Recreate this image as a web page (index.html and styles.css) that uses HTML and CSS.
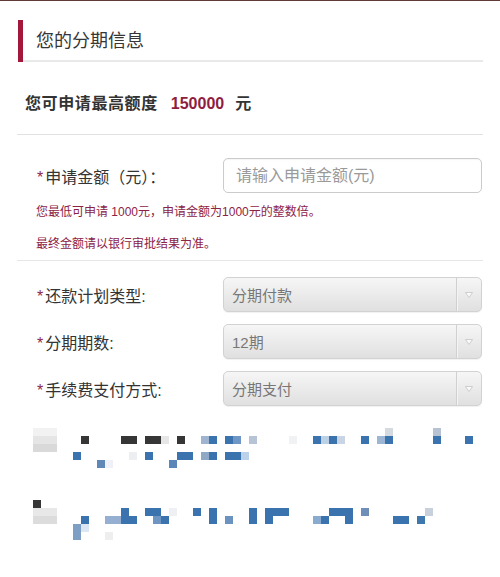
FILE: index.html
```html
<!DOCTYPE html>
<html lang="zh-CN">
<head>
  <meta charset="UTF-8" />
  <title>分期信息</title>
  <link rel="stylesheet" href="styles.css">
</head>
<body>

<div class="topline"></div>

<div class="page">
  <div class="sec-head">
    <span class="sec-bar"></span>
    <h2 class="sec-title">您的分期信息</h2>
  </div>

  <div class="quota">您可申请最高额度<span class="quota-num">150000</span>元</div>

  <div class="form-block amount">
    <div class="field">
      <label class="field-label"><i class="req">*</i>申请金额（元）：</label>
      <input class="text-input" type="text" placeholder="请输入申请金额(元)">
    </div>
    <p class="hint first">您最低可申请 1000元，申请金额为1000元的整数倍。</p>
    <p class="hint">最终金额请以银行审批结果为准。</p>
  </div>

  <div class="form-block selects">
    <div class="field">
      <label class="field-label"><i class="req">*</i>还款计划类型:</label>
      <div class="select"><span class="select-val">分期付款</span><span class="select-btn"><svg width="8" height="6" viewBox="0 0 8 6"><path d="M0.5 0.5h7L4 5.5z" fill="#fbfbfb" stroke="#c4c4c4" stroke-width="0.8"/></svg></span></div>
    </div>
    <div class="field">
      <label class="field-label"><i class="req">*</i>分期期数:</label>
      <div class="select"><span class="select-val">12期</span><span class="select-btn"><svg width="8" height="6" viewBox="0 0 8 6"><path d="M0.5 0.5h7L4 5.5z" fill="#fbfbfb" stroke="#c4c4c4" stroke-width="0.8"/></svg></span></div>
    </div>
    <div class="field">
      <label class="field-label"><i class="req">*</i>手续费支付方式:</label>
      <div class="select"><span class="select-val">分期支付</span><span class="select-btn"><svg width="8" height="6" viewBox="0 0 8 6"><path d="M0.5 0.5h7L4 5.5z" fill="#fbfbfb" stroke="#c4c4c4" stroke-width="0.8"/></svg></span></div>
    </div>
  </div>
</div>

<div class="mosaic" id="mosaic"></div>

<script>
  // 打码区域：[列, 行, 宽, 高, 颜色]
  const B = '#3a73ad';
  const D = '#363636';
  const cells = [
    [4, 53, 3, 1, '#f2f2f2'], [4, 54, 3, 1, '#e5e5e5'], [4, 55, 3, 1, '#d9d9d9'],
    [10, 54, 1, 1, D], [15, 54, 2, 1, D], [18, 54, 2, 1, D], [20, 54, 1, 1, '#e6e6e6'],
    [22, 54, 1, 1, D], [25, 54, 1, 1, '#9fb4cf'], [26, 54, 1, 1, B],
    [28, 54, 1, 1, B], [29, 54, 1, 1, '#6e97c6'], [31, 54, 1, 1, '#b6c4d6'],
    [36, 54, 1, 1, '#f0f2f4'], [39, 54, 1, 1, B], [40, 54, 1, 1, '#bcd0e6'],
    [41, 54, 1, 1, B], [42, 54, 1, 1, '#c9d5e4'], [45, 54, 1, 1, B],
    [47, 54, 1, 1, '#9db6d4'], [48, 54, 1, 1, B], [48, 53, 1, 1, '#d5dae0'],
    [54, 54, 1, 1, B], [54, 53, 1, 1, '#b7c3d2'], [58, 54, 1, 1, B],
    [9, 56, 1, 1, B], [16, 56, 1, 1, '#eceef2'], [18, 56, 1, 1, B], [22, 56, 2, 1, B],
    [25, 56, 1, 1, '#8ea8c6'], [26, 56, 1, 1, B], [28, 56, 2, 1, B], [30, 56, 1, 1, '#bcd2ea'],
    [12, 57, 1, 1, '#5f88b6'], [13, 57, 1, 1, '#eef2f6'], [21, 57, 1, 1, '#5a86b8'],

    [4, 62, 1, 1, D], [4, 63, 3, 1, '#e8e8e8'], [4, 64, 3, 1, '#dcdcdc'],
    [10, 64, 1, 1, B], [9, 65, 1, 2, '#7e9fc4'], [10, 65, 1, 1, '#dbe7f3'],
    [13, 64, 2, 1, '#94afd0'], [15, 63, 1, 1, B], [15, 64, 2, 1, B], [13, 66, 1, 1, '#eeeeee'],
    [18, 63, 2, 1, B], [19, 64, 1, 1, '#6f96c3'], [20, 64, 1, 1, B], [21, 63, 1, 1, '#eef0f4'],
    [24, 63, 1, 1, B], [26, 63, 1, 2, B], [28, 64, 1, 1, '#6c92bf'], [31, 63, 1, 2, B],
    [33, 63, 3, 1, B], [33, 64, 1, 1, B],
    [39, 64, 1, 1, '#8aaad0'], [40, 64, 1, 1, B], [41, 63, 3, 1, B], [43, 64, 1, 1, B],
    [45, 63, 1, 1, '#6f8fb8'], [49, 64, 2, 1, B], [52, 64, 1, 1, '#3f78ad'], [53, 63, 1, 1, '#c8d0dc']
  ];

  const mosaic = document.getElementById('mosaic');
  cells.forEach(([c, r, w, h, color]) => {
    const cell = document.createElement('div');
    cell.className = 'cell';
    cell.style.gridColumn = `${c + 1} / span ${w}`;
    cell.style.gridRow = `${r - 52} / span ${h}`;
    cell.style.background = color;
    mosaic.appendChild(cell);
  });
</script>

</body>
</html>
```

FILE: styles.css
```css
body {
  margin: 0;
  background: #fff;
  color: #333;
  font-family: "Liberation Sans", "Noto Sans CJK SC", sans-serif;
}

.topline {
  height: 1px;
  background: #5e3b36;
}

.page {
  padding: 19px 17px 0 17px;
}

.sec-head {
  display: flex;
  margin-left: 1px;
}

.sec-bar {
  width: 5px;
  height: 42px;
  background: #a3173a;
}

.sec-title {
  flex: 1;
  margin: 0;
  padding-left: 13px;
  height: 40px;
  line-height: 42px;
  font-size: 18px;
  font-weight: normal;
  color: #363636;
  border-bottom: 2px solid #e9e9e9;
}

.quota {
  padding: 31px 0 19px 8px;
  line-height: 22px;
  font-size: 16px;
  font-weight: bold;
  letter-spacing: 0.6px;
  color: #333;
  border-bottom: 1px solid #e2e2e2;
}

.quota-num {
  margin: 0 11px 0 13px;
  color: #8f1d3f;
  letter-spacing: 0;
}

.form-block.amount {
  padding: 23px 0 7px 0;
  border-bottom: 1px solid #e6e6e6;
}

.form-block.selects {
  padding-top: 16px;
  display: flex;
  flex-direction: column;
  gap: 12px;
}

.field {
  display: grid;
  grid-template-columns: 206px 1fr;
  align-items: center;
  padding-right: 1px;
}

.field-label {
  padding-left: 20px;
  font-size: 16px;
  color: #333;
  white-space: nowrap;
}

.req {
  font-style: normal;
  color: #8c2a4a;
  margin-right: 2px;
}

.text-input {
  box-sizing: border-box;
  height: 35px;
  width: 100%;
  padding: 0 12px;
  border: 1px solid #cbcbcb;
  border-radius: 5px;
  font-family: inherit;
  font-size: 16px;
  color: #333;
  box-shadow: inset 0 1px 1px rgba(0, 0, 0, 0.04);
}

.text-input::placeholder {
  color: #9a9a9a;
}

.hint {
  margin: 0;
  padding-left: 19px;
  font-size: 12px;
  line-height: 18px;
  color: #8c2346;
}

.hint.first {
  margin-top: 10px;
}

.hint + .hint {
  margin-top: 14px;
}

.select {
  box-sizing: border-box;
  height: 35px;
  display: flex;
  align-items: center;
  border: 1px solid #d2d2d2;
  border-radius: 5px;
  background: linear-gradient(#f6f6f6, #e0e0e0);
  box-shadow: 0 1px 1px rgba(0, 0, 0, 0.06);
}

.select-val {
  flex: 1;
  padding-left: 8px;
  font-size: 15px;
  color: #777;
}

.select-btn {
  width: 24px;
  height: 100%;
  display: flex;
  align-items: center;
  justify-content: center;
  border-left: 1px solid #d0d0d0;
  box-shadow: inset 1px 0 #f4f4f4;
}

.mosaic {
  display: grid;
  grid-template-columns: repeat(62, 8px);
  grid-auto-rows: 8px;
  margin: 22px 0 0 1px;
}
```
